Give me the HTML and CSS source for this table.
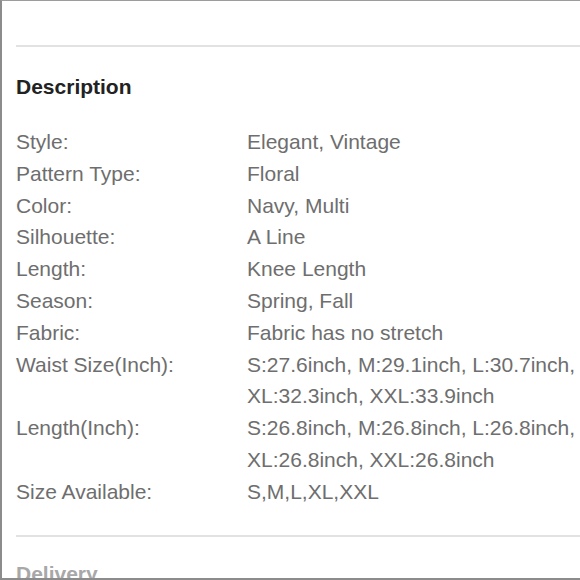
FILE: index.html
```html
<!DOCTYPE html>
<html>
<head>
<meta charset="utf-8">
<link rel="stylesheet" href="styles.css">
</head>
<body>
<div class="frame">
  <div class="divider"></div>
  <h2 class="title">Description</h2>
  <dl class="specs">
    <dt>Style:</dt><dd>Elegant, Vintage</dd>
    <dt>Pattern Type:</dt><dd>Floral</dd>
    <dt>Color:</dt><dd>Navy, Multi</dd>
    <dt>Silhouette:</dt><dd>A Line</dd>
    <dt>Length:</dt><dd>Knee Length</dd>
    <dt>Season:</dt><dd>Spring, Fall</dd>
    <dt>Fabric:</dt><dd>Fabric has no stretch</dd>
    <dt>Waist Size(Inch):</dt><dd>S:27.6inch, M:29.1inch, L:30.7inch, XL:32.3inch, XXL:33.9inch</dd>
    <dt>Length(Inch):</dt><dd>S:26.8inch, M:26.8inch, L:26.8inch, XL:26.8inch, XXL:26.8inch</dd>
    <dt>Size Available:</dt><dd>S,M,L,XL,XXL</dd>
  </dl>
  <div class="divider lower"></div>
  <h2 class="title muted">Delivery</h2>
</div>
</body>
</html>
```
FILE: styles.css
```css
html, body {
  margin: 0;
  padding: 0;
  background: #fff;
}
.frame {
  box-sizing: border-box;
  width: 580px;
  height: 580px;
  overflow: hidden;
  border-top: 1px solid #9c9c9c;
  border-left: 2px solid #8c8c8c;
  border-bottom: 2px solid #8c8c8c;
  padding: 44px 0 0 14px;
  font-family: "Liberation Sans", Arial, sans-serif;
  font-size: 21px;
  color: #6e6e6e;
}
.divider {
  height: 2px;
  background: #e2e2e2;
}
.divider.lower {
  margin-top: 27px;
}
.title {
  margin: 24px 0 0 0;
  font-size: 21px;
  line-height: 32px;
  font-weight: bold;
  color: #222;
}
.title.muted {
  margin-top: 21px;
  color: #a8a8a8;
}
.specs {
  display: grid;
  grid-template-columns: 231px 1fr;
  margin: 23px 0 0 0;
  line-height: 31.8px;
}
.specs dt, .specs dd {
  margin: 0;
}
```
